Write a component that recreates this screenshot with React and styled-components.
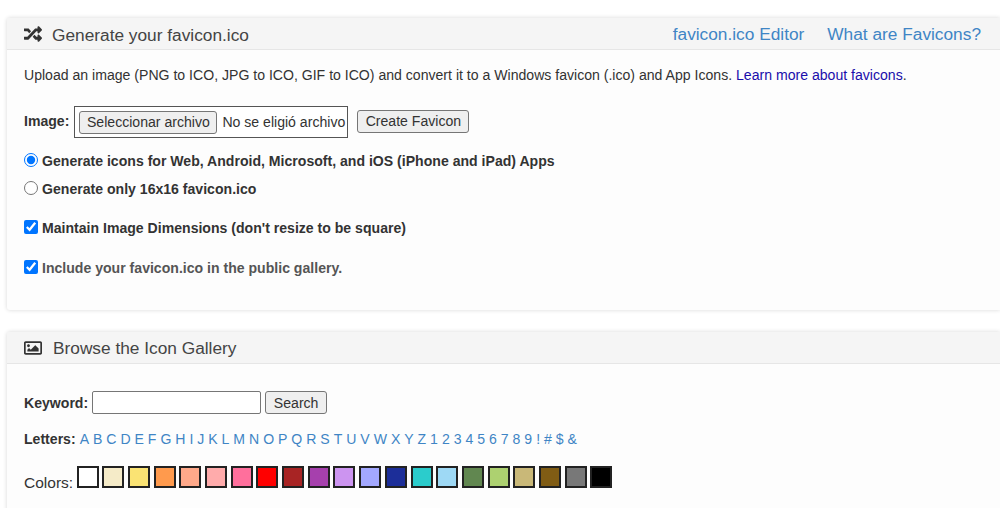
import React from "react";
import styled, { createGlobalStyle } from "styled-components";
import { FaRandom, FaRegImage } from "react-icons/fa";

const GlobalStyle = createGlobalStyle`
  html, body {
    margin: 0;
    height: 508px;
    overflow: hidden;
    background: #fff;
    font-family: "Liberation Sans", Arial, sans-serif;
    color: #333;
  }
`;

const Page = styled.div`
  width: 1000px;
  height: 508px;
  overflow: hidden;
  padding: 18px 0 0 7px;
  box-sizing: border-box;
  display: flex;
  flex-direction: column;
  gap: 22px;
`;

const Card = styled.section`
  background: #fdfdfd;
  box-shadow: 0 0 4px rgba(0, 0, 0, 0.16);
  border-radius: 3px 0 0 3px;
  flex: none;
  height: ${p => p.$height}px;
`;

const CardHeader = styled.header`
  height: 31px;
  background: #f5f5f5;
  border-bottom: 1px solid #e6e6e6;
  display: flex;
  align-items: center;
  padding-left: 17px;
  box-sizing: content-box;
`;

const ShuffleGlyph = styled(FaRandom)`
  width: 18px;
  height: 18px;
  margin-right: 10px;
  color: #333;
  flex: none;
`;

const PictureGlyph = styled(FaRegImage)`
  width: 18px;
  height: 18px;
  margin-right: 11px;
  color: #333;
  flex: none;
`;

const CardTitle = styled.h2`
  margin: ${p => p.$nudge}px 0 0;
  font-size: 17.3px;
  font-weight: 400;
  color: #444;
  flex: 1;
`;

const HeaderLink = styled.a`
  font-size: 17.3px;
  color: #3f85c5;
  margin: 2px ${p => p.$gap}px 0 0;
`;

const CardBody = styled.div`
  padding: ${p => p.$top}px 0 0 17px;
  font-size: 14.08px;
`;

const Intro = styled.p`
  margin: 0 0 23px;
  line-height: 16px;
  font-size: 14.08px;
  color: #333;
`;

const LearnMore = styled.a`
  color: #1a0dab;
`;

const UploadRow = styled.div`
  display: flex;
  align-items: center;
  height: 30px;
  margin-bottom: 17px;
`;

const FieldLabel = styled.label`
  font-weight: 700;
  font-size: 14.08px;
  color: #333;
  margin-right: ${p => p.$gap}px;
`;

const FileBox = styled.div`
  width: 274px;
  height: 32px;
  box-sizing: border-box;
  border: 1px solid #555;
  background: #fff;
  display: flex;
  align-items: center;
  padding-left: 4px;
  margin: 2px 9px 0 0;
  font-size: 14.08px;
  color: #333;
`;

const Button = styled.button`
  font-family: "Liberation Sans", Arial, sans-serif;
  font-size: 14.08px;
  color: #333;
  background: #efefef;
  border: 1px solid #767676;
  border-radius: 3px;
  padding: 0;
  height: ${p => p.$height}px;
  width: ${p => p.$width}px;
  flex: none;
`;

const FileName = styled.span`
  margin-left: 5px;
`;

const OptionRow = styled.label`
  display: flex;
  align-items: center;
  height: 16px;
  margin-bottom: ${p => p.$after}px;
  font-weight: 700;
  font-size: 14.08px;
  color: ${p => p.$muted ? "#555" : "#333"};
`;

const Tick = styled.input`
  width: 14px;
  height: 14px;
  margin: -2px 4px 0 0;
  flex: none;
`;

const SearchRow = styled.div`
  display: flex;
  align-items: center;
  height: 23px;
  margin-bottom: 17px;
`;

const KeywordInput = styled.input`
  width: 169px;
  height: 23px;
  box-sizing: border-box;
  border: 1px solid #767676;
  border-radius: 2px;
  background: #fff;
  margin-right: 4px;
`;

const LettersRow = styled.div`
  display: flex;
  align-items: center;
  height: 16px;
  font-size: 14.08px;
  margin-bottom: 14px;
`;

const Letter = styled.a`
  color: #3f85c5;
  margin-right: 3.95px;
`;

const ColorsRow = styled.div`
  display: flex;
  align-items: center;
`;

const ColorsLabel = styled.span`
  font-size: 15.5px;
  color: #333;
  margin: 13px 3.5px 0 0;
`;

const Swatch = styled.span`
  width: 22px;
  height: 22px;
  box-sizing: border-box;
  border: 2px solid #222;
  background: ${p => p.$color};
  margin-right: 3.7px;
  flex: none;
`;

const letters = "ABCDEFGHIJKLMNOPQRSTUVWXYZ123456789!#$&".split("");
const colors = [
  "#ffffff", "#f5ebc8", "#fae373", "#ff9a4d", "#ffa98a", "#ffabab", "#ff6f9c",
  "#ff0000", "#a82424", "#a640ad", "#cc94f0", "#a3a8ff", "#1c2e99", "#2bcccc",
  "#9ed9f5", "#618750", "#add170", "#c9b878", "#805c14", "#787878", "#000000",
];

export default function App() {
  return (
    <Page>
      <GlobalStyle />
      <Card $height={292}>
        <CardHeader>
          <ShuffleGlyph />
          <CardTitle $nudge={4}>Generate your favicon.ico</CardTitle>
          <HeaderLink $gap={23}>favicon.ico Editor</HeaderLink>
          <HeaderLink $gap={19}>What are Favicons?</HeaderLink>
        </CardHeader>
        <CardBody $top={17}>
          <Intro>
            Upload an image (PNG to ICO, JPG to ICO, GIF to ICO) and convert it to a Windows favicon (.ico) and App Icons.{" "}
            <LearnMore>Learn more about favicons</LearnMore>.
          </Intro>
          <UploadRow>
            <FieldLabel $gap={5}>Image:</FieldLabel>
            <FileBox>
              <Button type="button" $width={138} $height={23}>Seleccionar archivo</Button>
              <FileName>No se eligió archivo</FileName>
            </FileBox>
            <Button type="button" $width={112} $height={23}>Create Favicon</Button>
          </UploadRow>
          <OptionRow $after={12}>
            <Tick type="radio" name="mode" defaultChecked />
            Generate icons for Web, Android, Microsoft, and iOS (iPhone and iPad) Apps
          </OptionRow>
          <OptionRow $after={23}>
            <Tick type="radio" name="mode" />
            Generate only 16x16 favicon.ico
          </OptionRow>
          <OptionRow $after={24}>
            <Tick type="checkbox" defaultChecked />
            Maintain Image Dimensions (don't resize to be square)
          </OptionRow>
          <OptionRow $after={0} $muted>
            <Tick type="checkbox" defaultChecked />
            Include your favicon.ico in the public gallery.
          </OptionRow>
        </CardBody>
      </Card>
      <Card $height={190}>
        <CardHeader>
          <PictureGlyph />
          <CardTitle $nudge={2}>Browse the Icon Gallery</CardTitle>
        </CardHeader>
        <CardBody $top={27}>
          <SearchRow>
            <FieldLabel $gap={4}>Keyword:</FieldLabel>
            <KeywordInput type="text" />
            <Button type="button" $width={62} $height={23}>Search</Button>
          </SearchRow>
          <LettersRow>
            <FieldLabel $gap={4}>Letters:</FieldLabel>
            {letters.map(l => <Letter key={l}>{l}</Letter>)}
          </LettersRow>
          <ColorsRow>
            <ColorsLabel>Colors:</ColorsLabel>
            {colors.map(c => <Swatch key={c} $color={c} />)}
          </ColorsRow>
        </CardBody>
      </Card>
    </Page>
  );
}
